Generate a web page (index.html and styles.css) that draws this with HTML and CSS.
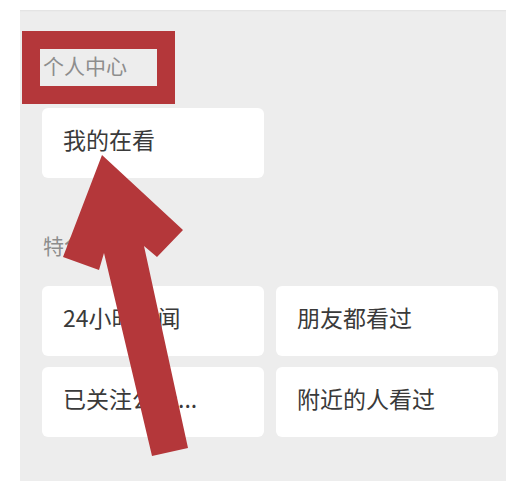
FILE: index.html
```html
<!DOCTYPE html>
<html lang="zh-CN">
<head>
    <meta charset="UTF-8">
    <meta name="viewport" content="width=device-width, initial-scale=1.0">
    <title>看一看设置</title>
    <link rel="stylesheet" href="styles.css">
</head>
<body>

    <div class="page">
        <div class="panel">
            <div class="section-title first">个人中心</div>
            <div class="grid">
                <div class="card">我的在看</div>
            </div>

            <div class="section-title second">特色</div>
            <div class="grid">
                <div class="card">24小时新闻</div>
                <div class="card">朋友都看过</div>
                <div class="card">已关注公众...</div>
                <div class="card">附近的人看过</div>
            </div>
        </div>
    </div>

    <!-- annotation drawn over the screenshot -->
    <svg class="markup" width="506" height="481" viewBox="0 0 506 481">
        <rect x="31" y="40" width="135" height="55" fill="none" stroke="#b4373a" stroke-width="18"/>
        <polygon fill="#b4373a" points="102,155 183,230 157,257 144,246 188,448 152,456 104,253 99,270 63,257"/>
    </svg>

</body>
</html>
```

FILE: styles.css
```css
body {
    margin: 0;
    padding: 0;
    background-color: #fff;
    font-family: "Noto Sans CJK SC", "Noto Sans", sans-serif;
    width: 506px;
    height: 481px;
    overflow: hidden;
    position: relative;
}

.page {
    padding-top: 10px;
    padding-left: 20px;
    height: 471px;
}

.panel {
    background-color: #ededed;
    height: 100%;
    padding: 0 8px 0 22px;
    box-shadow: inset 0 2px 2px -1px rgba(0, 0, 0, 0.05);
}

.section-title {
    font-size: 21px;
    line-height: 30px;
    color: #8d8d8d;
    padding-left: 1px;
}

.section-title.first {
    padding-top: 40px;
    margin-bottom: 28px;
}

.section-title.second {
    margin-top: 52px;
    margin-bottom: 26px;
}

.grid {
    display: grid;
    grid-template-columns: 222px 222px;
    column-gap: 12px;
    row-gap: 11px;
}

.card {
    background-color: #fff;
    border-radius: 6px;
    height: 70px;
    box-sizing: border-box;
    display: flex;
    align-items: center;
    padding: 0 0 9px 21px;
    font-size: 23px;
    color: #3a3a3a;
    white-space: nowrap;
}

.markup {
    position: absolute;
    top: 0;
    left: 0;
    pointer-events: none;
}
```
